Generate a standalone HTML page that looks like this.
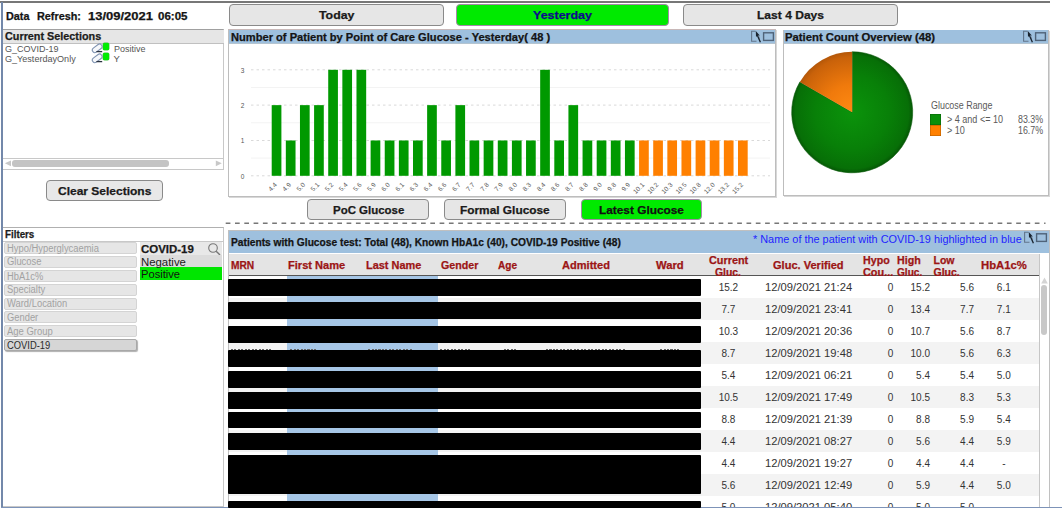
<!DOCTYPE html>
<html><head><meta charset="utf-8"><style>
html,body{margin:0;padding:0;background:#fff;width:1064px;height:512px;overflow:hidden;position:relative;font-family:"Liberation Sans", sans-serif;}
.t{position:absolute;white-space:nowrap;line-height:1;transform-origin:0 0;}
svg text{font-family:"Liberation Sans", sans-serif;}
</style></head><body>
<div style="position:absolute;left:0.00px;top:1.40px;width:1050.00px;height:1.30px;background:#777"></div>
<div style="position:absolute;left:1.20px;top:2.00px;width:1.40px;height:506.00px;background:#7388aa"></div>
<div class="t" style="left:5.60px;top:11.13px;font-size:10.50px;font-weight:bold;-webkit-text-stroke:0.25px currentColor;transform:scaleX(1.0295);color:#141414;">Data</div>
<div class="t" style="left:36.50px;top:11.13px;font-size:10.50px;font-weight:bold;-webkit-text-stroke:0.25px currentColor;transform:scaleX(1.0306);color:#141414;">Refresh:</div>
<div class="t" style="left:88.00px;top:11.13px;font-size:10.50px;font-weight:bold;-webkit-text-stroke:0.25px currentColor;transform:scaleX(1.2369);color:#141414;">13/09/2021</div>
<div class="t" style="left:157.70px;top:11.13px;font-size:10.50px;font-weight:bold;-webkit-text-stroke:0.25px currentColor;transform:scaleX(1.0983);color:#141414;">06:05</div>
<div style="position:absolute;left:229.00px;top:4.00px;width:215.20px;height:22.00px;box-sizing:border-box;background:#e6e6e6;border:1.5px solid #8a8a8a;border-radius:4px"></div>
<div class="t" style="left:319.10px;top:10.20px;font-size:11.00px;font-weight:bold;-webkit-text-stroke:0.25px currentColor;transform:scaleX(1.1209);color:#1a1a1a;">Today</div>
<div style="position:absolute;left:455.50px;top:4.00px;width:213.25px;height:22.00px;box-sizing:border-box;background:#00ea00;border:1.5px solid #a48aa8;border-radius:4px"></div>
<div class="t" style="left:533.00px;top:10.20px;font-size:11.00px;font-weight:bold;-webkit-text-stroke:0.25px currentColor;transform:scaleX(1.1349);color:#0c0c8c;">Yesterday</div>
<div style="position:absolute;left:683.00px;top:4.00px;width:215.00px;height:22.00px;box-sizing:border-box;background:#e6e6e6;border:1.5px solid #8a8a8a;border-radius:4px"></div>
<div class="t" style="left:757.00px;top:10.20px;font-size:11.00px;font-weight:bold;-webkit-text-stroke:0.25px currentColor;transform:scaleX(1.0957);color:#1a1a1a;">Last 4 Days</div>
<div style="position:absolute;left:3.00px;top:28.80px;width:221.00px;height:141.20px;box-sizing:border-box;border:1px solid #c8c8c8;border-left:none;border-top:1px solid #a0a0a0;background:#fff"></div>
<div style="position:absolute;left:3.00px;top:29.50px;width:220.50px;height:13.30px;background:#e6e6e6;border-bottom:1px solid #c0c0c0"></div>
<div class="t" style="left:4.80px;top:31.32px;font-size:10.50px;font-weight:bold;-webkit-text-stroke:0.25px currentColor;transform:scaleX(1.0305);color:#1c1c1c;">Current Selections</div>
<div class="t" style="left:4.50px;top:44.08px;font-size:9.50px;transform:scaleX(0.9471);color:#555;">G_COVID-19</div>
<div class="t" style="left:4.50px;top:54.08px;font-size:9.50px;transform:scaleX(0.9540);color:#555;">G_YesterdayOnly</div>
<div class="t" style="left:113.50px;top:44.08px;font-size:9.50px;transform:scaleX(0.9471);color:#555;">Positive</div>
<div class="t" style="left:113.50px;top:54.08px;font-size:9.50px;color:#555;">Y</div>
<div style="position:absolute;left:102.80px;top:43.30px;width:6.70px;height:6.60px;background:#00ec00;border-radius:1.5px;box-shadow:0 0 0 0.4px #40c040"></div>
<svg style="position:absolute;left:88px;top:42.0px" width="16" height="12" viewBox="0 0 16 12"><rect x="-5.4" y="-2.5" width="10.8" height="5" rx="2.4" transform="translate(9.2 6.3) rotate(-37)" fill="#f6f8fb" stroke="#8094b2" stroke-width="1.1"/><path d="M8.4 9.6 L14.2 9.6" stroke="#2a3340" stroke-width="1.3"/></svg>
<div style="position:absolute;left:102.80px;top:53.40px;width:6.70px;height:6.60px;background:#00ec00;border-radius:1.5px;box-shadow:0 0 0 0.4px #40c040"></div>
<svg style="position:absolute;left:88px;top:52.1px" width="16" height="12" viewBox="0 0 16 12"><rect x="-5.4" y="-2.5" width="10.8" height="5" rx="2.4" transform="translate(9.2 6.3) rotate(-37)" fill="#f6f8fb" stroke="#8094b2" stroke-width="1.1"/><path d="M8.4 9.6 L14.2 9.6" stroke="#2a3340" stroke-width="1.3"/></svg>
<div style="position:absolute;left:3.00px;top:158.20px;width:220.00px;height:10.80px;box-sizing:border-box;border-top:1px solid #c8c8c8;background:#fff"></div>
<div style="position:absolute;left:12.00px;top:160.00px;width:157.00px;height:6.50px;background:#c4c4c4;border-radius:3px"></div>
<svg style="position:absolute;left:4px;top:159px" width="220" height="10"><path d="M0.8 4.3 L7 1.5 L7 7.2 Z" fill="#c8c8c8"/><path d="M217.8 4.3 L211.8 1.5 L211.8 7.2 Z" fill="#c8c8c8"/></svg>
<div style="position:absolute;left:46.00px;top:179.60px;width:116.60px;height:21.20px;box-sizing:border-box;background:#e8e8e8;border:1.5px solid #8a8a8a;border-radius:4px"></div>
<div class="t" style="left:58.00px;top:186.10px;font-size:11.00px;font-weight:bold;-webkit-text-stroke:0.25px currentColor;transform:scaleX(1.0901);color:#1a1a1a;">Clear Selections</div>
<div style="position:absolute;left:3.00px;top:227.20px;width:221.00px;height:279.80px;box-sizing:border-box;border:1px solid #c8c8c8;border-left:none;border-top:1px solid #b0b0b0;background:#fff"></div>
<div style="position:absolute;left:3.00px;top:240.50px;width:220.50px;height:1.00px;background:#c8c8c8"></div>
<div class="t" style="left:4.70px;top:229.02px;font-size:10.50px;font-weight:bold;-webkit-text-stroke:0.25px currentColor;transform:scaleX(0.9298);color:#1c1c1c;">Filters</div>
<div style="position:absolute;left:4.20px;top:242.10px;width:133.30px;height:12.00px;box-sizing:border-box;background:#e6e6e6;border:1px solid #d4d4d4;border-radius:2px"></div>
<div class="t" style="left:6.80px;top:243.65px;font-size:10.00px;transform:scaleX(0.9394);color:#a2a2a2;">Hypo/Hyperglycaemia</div>
<div style="position:absolute;left:4.20px;top:255.90px;width:133.30px;height:12.00px;box-sizing:border-box;background:#e6e6e6;border:1px solid #d4d4d4;border-radius:2px"></div>
<div class="t" style="left:6.80px;top:257.45px;font-size:10.00px;transform:scaleX(0.9392);color:#a2a2a2;">Glucose</div>
<div style="position:absolute;left:4.20px;top:270.00px;width:133.30px;height:12.00px;box-sizing:border-box;background:#e6e6e6;border:1px solid #d4d4d4;border-radius:2px"></div>
<div class="t" style="left:6.80px;top:271.55px;font-size:10.00px;transform:scaleX(0.9304);color:#a2a2a2;">HbA1c%</div>
<div style="position:absolute;left:4.20px;top:283.80px;width:133.30px;height:12.00px;box-sizing:border-box;background:#e6e6e6;border:1px solid #d4d4d4;border-radius:2px"></div>
<div class="t" style="left:6.80px;top:285.35px;font-size:10.00px;transform:scaleX(0.9414);color:#a2a2a2;">Specialty</div>
<div style="position:absolute;left:4.20px;top:297.60px;width:133.30px;height:12.00px;box-sizing:border-box;background:#e6e6e6;border:1px solid #d4d4d4;border-radius:2px"></div>
<div class="t" style="left:6.80px;top:299.15px;font-size:10.00px;transform:scaleX(0.9390);color:#a2a2a2;">Ward/Location</div>
<div style="position:absolute;left:4.20px;top:311.40px;width:133.30px;height:12.00px;box-sizing:border-box;background:#e6e6e6;border:1px solid #d4d4d4;border-radius:2px"></div>
<div class="t" style="left:6.80px;top:312.95px;font-size:10.00px;transform:scaleX(0.9355);color:#a2a2a2;">Gender</div>
<div style="position:absolute;left:4.20px;top:325.30px;width:133.30px;height:12.00px;box-sizing:border-box;background:#e6e6e6;border:1px solid #d4d4d4;border-radius:2px"></div>
<div class="t" style="left:6.80px;top:326.85px;font-size:10.00px;transform:scaleX(0.9450);color:#a2a2a2;">Age Group</div>
<div style="position:absolute;left:4.20px;top:339.00px;width:133.30px;height:11.80px;box-sizing:border-box;background:#d6d6d6;border:1px solid #a8a8a8;border-radius:2px;box-shadow:1px 1px 1px #b0b0b0"></div>
<div class="t" style="left:6.80px;top:340.55px;font-size:10.00px;transform:scaleX(0.9367);color:#2a2a2a;">COVID-19</div>
<div style="position:absolute;left:139.50px;top:242.30px;width:82.30px;height:12.70px;background:#e8e8e8"></div>
<div class="t" style="left:141.00px;top:243.70px;font-size:11.00px;font-weight:bold;-webkit-text-stroke:0.25px currentColor;transform:scaleX(1.0408);color:#1a1a1a;">COVID-19</div>
<svg style="position:absolute;left:207px;top:242px" width="15" height="14" viewBox="0 0 15 14"><circle cx="6" cy="6" r="4.3" fill="none" stroke="#777" stroke-width="1.1"/><path d="M9.2 9.2 L13 13" stroke="#777" stroke-width="1.4"/></svg>
<div style="position:absolute;left:139.50px;top:255.00px;width:82.30px;height:11.60px;background:#dcdcdc"></div>
<div style="position:absolute;left:139.50px;top:266.60px;width:82.30px;height:13.70px;background:#00e600"></div>
<div class="t" style="left:141.00px;top:256.70px;font-size:11.00px;transform:scaleX(1.0342);color:#1a1a1a;">Negative</div>
<div class="t" style="left:141.00px;top:269.40px;font-size:11.00px;transform:scaleX(1.0127);color:#111;">Positive</div>
<div style="position:absolute;left:228.00px;top:29.30px;width:548.00px;height:168.00px;box-sizing:border-box;border:1px solid #bdbdbd;border-top:1px solid #c8b8b8;background:#fff;box-shadow:1px 1px 0 #d8d8d8"></div>
<div style="position:absolute;left:229.00px;top:30.00px;width:546.00px;height:12.90px;background:#9ec0de;box-shadow:0 1px 0 #b4c4d0"></div>
<div class="t" style="left:231.10px;top:32.23px;font-size:10.50px;font-weight:bold;-webkit-text-stroke:0.25px currentColor;transform:scaleX(1.0585);color:#141414;">Number of Patient by Point of Care Glucose - Yesterday( 48 )</div>
<div style="position:absolute;left:783.00px;top:30.00px;width:265.50px;height:166.00px;box-sizing:border-box;border:1px solid #bdbdbd;background:#fff;box-shadow:1px 1px 0 #d8d8d8"></div>
<div style="position:absolute;left:784.00px;top:30.00px;width:263.50px;height:12.90px;background:#9ec0de;box-shadow:0 1px 0 #b4c4d0"></div>
<div class="t" style="left:785.00px;top:32.23px;font-size:10.50px;font-weight:bold;-webkit-text-stroke:0.25px currentColor;transform:scaleX(1.0757);color:#141414;">Patient Count Overview (48)</div>
<svg style="position:absolute;left:749.5px;top:30.0px" width="26" height="13" viewBox="0 0 26 13"><path d="M6.5 11.2 L1.6 11.2 L1.6 1.2 L5.6 1.2" fill="none" stroke="#62748a" stroke-width="1.1"/><path d="M9.4 6.5 L9.4 9.5" fill="none" stroke="#7f92a8" stroke-width="0.9"/><path d="M5.8 1.0 L9.8 5.4 L7.6 5.5 L6.0 7.0 Z" fill="#1a2430"/><path d="M7.0 4.6 L10.4 12.2" fill="none" stroke="#1a2430" stroke-width="1.3"/><rect x="13.6" y="2.8" width="9.8" height="7.6" fill="none" stroke="#4f6379" stroke-width="1.4"/></svg>
<svg style="position:absolute;left:1022.0px;top:30.0px" width="26" height="13" viewBox="0 0 26 13"><path d="M6.5 11.2 L1.6 11.2 L1.6 1.2 L5.6 1.2" fill="none" stroke="#62748a" stroke-width="1.1"/><path d="M9.4 6.5 L9.4 9.5" fill="none" stroke="#7f92a8" stroke-width="0.9"/><path d="M5.8 1.0 L9.8 5.4 L7.6 5.5 L6.0 7.0 Z" fill="#1a2430"/><path d="M7.0 4.6 L10.4 12.2" fill="none" stroke="#1a2430" stroke-width="1.3"/><rect x="13.6" y="2.8" width="9.8" height="7.6" fill="none" stroke="#4f6379" stroke-width="1.4"/></svg>
<div style="position:absolute;left:307.20px;top:199.10px;width:122.20px;height:20.80px;box-sizing:border-box;background:#e6e6e6;border:1.5px solid #8a8a8a;border-radius:4px"></div>
<div class="t" style="left:332.80px;top:205.00px;font-size:11.00px;font-weight:bold;-webkit-text-stroke:0.25px currentColor;transform:scaleX(1.0414);color:#1a1a1a;">PoC Glucose</div>
<div style="position:absolute;left:444.00px;top:199.10px;width:121.60px;height:20.80px;box-sizing:border-box;background:#e6e6e6;border:1.5px solid #8a8a8a;border-radius:4px"></div>
<div class="t" style="left:460.10px;top:205.00px;font-size:11.00px;font-weight:bold;-webkit-text-stroke:0.25px currentColor;transform:scaleX(1.0789);color:#1a1a1a;">Formal Glucose</div>
<div style="position:absolute;left:580.80px;top:199.10px;width:121.20px;height:20.80px;box-sizing:border-box;background:#00ea00;border:1.5px solid #a48aa8;border-radius:4px"></div>
<div class="t" style="left:598.90px;top:205.00px;font-size:11.00px;font-weight:bold;-webkit-text-stroke:0.25px currentColor;transform:scaleX(1.0766);color:#111;">Latest Glucose</div>
<svg style="position:absolute;left:224px;top:222px" width="840" height="3"><line x1="1.7" y1="1.3" x2="821.5" y2="1.3" stroke="#777" stroke-width="1.6" stroke-dasharray="4.7 4.6"/></svg>
<div style="position:absolute;left:228.00px;top:230.00px;width:821.50px;height:282.00px;box-sizing:border-box;border:1px solid #c0c0c0;background:#fff"></div>
<div style="position:absolute;left:229.00px;top:231.00px;width:819.50px;height:22.00px;background:#9ec0de"></div>
<div class="t" style="left:230.80px;top:237.42px;font-size:10.50px;font-weight:bold;-webkit-text-stroke:0.25px currentColor;transform:scaleX(0.9730);color:#141414;">Patients with Glucose test: Total (48), Known HbA1c (40), COVID-19 Positive (48)</div>
<div class="t" style="left:753.30px;top:234.40px;font-size:11.00px;transform:scaleX(0.9897);color:#1f1fff;">* Name of the patient with COVID-19 highlighted in blue</div>
<svg style="position:absolute;left:1022.5px;top:231.0px" width="26" height="13" viewBox="0 0 26 13"><path d="M6.5 11.2 L1.6 11.2 L1.6 1.2 L5.6 1.2" fill="none" stroke="#62748a" stroke-width="1.1"/><path d="M9.4 6.5 L9.4 9.5" fill="none" stroke="#7f92a8" stroke-width="0.9"/><path d="M5.8 1.0 L9.8 5.4 L7.6 5.5 L6.0 7.0 Z" fill="#1a2430"/><path d="M7.0 4.6 L10.4 12.2" fill="none" stroke="#1a2430" stroke-width="1.3"/><rect x="13.6" y="2.8" width="9.8" height="7.6" fill="none" stroke="#4f6379" stroke-width="1.4"/></svg>
<div style="position:absolute;left:229.00px;top:253.80px;width:810.00px;height:21.70px;background:#e4e4e4;border-bottom:1.5px solid #555"></div>
<div class="t" style="left:231.00px;top:260.42px;font-size:10.50px;font-weight:bold;-webkit-text-stroke:0.25px currentColor;transform:scaleX(0.9704);color:#9c1515;">MRN</div>
<div class="t" style="left:288.00px;top:260.42px;font-size:10.50px;font-weight:bold;-webkit-text-stroke:0.25px currentColor;transform:scaleX(1.0541);color:#9c1515;">First Name</div>
<div class="t" style="left:366.00px;top:260.42px;font-size:10.50px;font-weight:bold;-webkit-text-stroke:0.25px currentColor;transform:scaleX(1.0413);color:#9c1515;">Last Name</div>
<div class="t" style="left:440.50px;top:260.42px;font-size:10.50px;font-weight:bold;-webkit-text-stroke:0.25px currentColor;transform:scaleX(1.0147);color:#9c1515;">Gender</div>
<div class="t" style="left:498.00px;top:260.42px;font-size:10.50px;font-weight:bold;-webkit-text-stroke:0.25px currentColor;transform:scaleX(0.9579);color:#9c1515;">Age</div>
<div class="t" style="left:562.40px;top:260.42px;font-size:10.50px;font-weight:bold;-webkit-text-stroke:0.25px currentColor;transform:scaleX(1.0528);color:#9c1515;">Admitted</div>
<div class="t" style="left:655.50px;top:260.42px;font-size:10.50px;font-weight:bold;-webkit-text-stroke:0.25px currentColor;transform:scaleX(1.0711);color:#9c1515;">Ward</div>
<div class="t" style="left:708.80px;top:255.32px;font-size:10.50px;font-weight:bold;-webkit-text-stroke:0.25px currentColor;transform:scaleX(1.0339);color:#9c1515;">Current</div>
<div class="t" style="left:714.80px;top:266.62px;font-size:10.50px;font-weight:bold;-webkit-text-stroke:0.25px currentColor;transform:scaleX(0.9905);color:#9c1515;">Gluc.</div>
<div class="t" style="left:772.90px;top:260.42px;font-size:10.50px;font-weight:bold;-webkit-text-stroke:0.25px currentColor;transform:scaleX(1.0521);color:#9c1515;">Gluc. Verified</div>
<div class="t" style="left:862.50px;top:255.32px;font-size:10.50px;font-weight:bold;-webkit-text-stroke:0.25px currentColor;transform:scaleX(1.0171);color:#9c1515;">Hypo</div>
<div class="t" style="left:862.50px;top:266.62px;font-size:10.50px;font-weight:bold;-webkit-text-stroke:0.25px currentColor;transform:scaleX(1.0357);color:#9c1515;">Cou...</div>
<div class="t" style="left:896.70px;top:255.32px;font-size:10.50px;font-weight:bold;-webkit-text-stroke:0.25px currentColor;transform:scaleX(1.0158);color:#9c1515;">High</div>
<div class="t" style="left:896.70px;top:266.62px;font-size:10.50px;font-weight:bold;-webkit-text-stroke:0.25px currentColor;transform:scaleX(0.9638);color:#9c1515;">Gluc.</div>
<div class="t" style="left:933.50px;top:255.32px;font-size:10.50px;font-weight:bold;-webkit-text-stroke:0.25px currentColor;color:#9c1515;">Low</div>
<div class="t" style="left:933.50px;top:266.62px;font-size:10.50px;font-weight:bold;-webkit-text-stroke:0.25px currentColor;color:#9c1515;">Gluc.</div>
<div class="t" style="left:981.20px;top:260.42px;font-size:10.50px;font-weight:bold;-webkit-text-stroke:0.25px currentColor;transform:scaleX(1.0752);color:#9c1515;">HbA1c%</div>
<div style="position:absolute;left:229.00px;top:276.00px;width:810.00px;height:22.00px;background:#ffffff"></div>
<div style="position:absolute;left:286.60px;top:276.00px;width:151.20px;height:22.00px;background:#a6c6e6"></div>
<div class="t" style="left:718.67px;top:282.95px;font-size:10.00px;color:#333;">15.2</div>
<div class="t" style="left:765.10px;top:282.95px;font-size:10.00px;transform:scaleX(1.1188);color:#333;">12/09/2021 21:24</div>
<div class="t" style="left:887.64px;top:282.95px;font-size:10.00px;color:#333;">0</div>
<div class="t" style="left:910.54px;top:282.95px;font-size:10.00px;color:#333;">15.2</div>
<div class="t" style="left:960.10px;top:282.95px;font-size:10.00px;color:#333;">5.6</div>
<div class="t" style="left:996.85px;top:282.95px;font-size:10.00px;color:#333;">6.1</div>
<div style="position:absolute;left:229.00px;top:298.00px;width:810.00px;height:22.00px;background:#f3f3f3"></div>
<div style="position:absolute;left:286.60px;top:298.00px;width:151.20px;height:22.00px;background:#a6c6e6"></div>
<div class="t" style="left:721.45px;top:304.95px;font-size:10.00px;color:#333;">7.7</div>
<div class="t" style="left:765.10px;top:304.95px;font-size:10.00px;transform:scaleX(1.1188);color:#333;">12/09/2021 23:41</div>
<div class="t" style="left:887.64px;top:304.95px;font-size:10.00px;color:#333;">0</div>
<div class="t" style="left:910.54px;top:304.95px;font-size:10.00px;color:#333;">13.4</div>
<div class="t" style="left:960.10px;top:304.95px;font-size:10.00px;color:#333;">7.7</div>
<div class="t" style="left:996.85px;top:304.95px;font-size:10.00px;color:#333;">7.1</div>
<div style="position:absolute;left:229.00px;top:320.00px;width:810.00px;height:22.00px;background:#ffffff"></div>
<div style="position:absolute;left:286.60px;top:320.00px;width:151.20px;height:22.00px;background:#a6c6e6"></div>
<div class="t" style="left:718.67px;top:326.95px;font-size:10.00px;color:#333;">10.3</div>
<div class="t" style="left:765.10px;top:326.95px;font-size:10.00px;transform:scaleX(1.1188);color:#333;">12/09/2021 20:36</div>
<div class="t" style="left:887.64px;top:326.95px;font-size:10.00px;color:#333;">0</div>
<div class="t" style="left:910.54px;top:326.95px;font-size:10.00px;color:#333;">10.7</div>
<div class="t" style="left:960.10px;top:326.95px;font-size:10.00px;color:#333;">5.6</div>
<div class="t" style="left:996.85px;top:326.95px;font-size:10.00px;color:#333;">8.7</div>
<div style="position:absolute;left:229.00px;top:342.00px;width:810.00px;height:22.00px;background:#f3f3f3"></div>
<div style="position:absolute;left:286.60px;top:342.00px;width:151.20px;height:22.00px;background:#a6c6e6"></div>
<div class="t" style="left:721.45px;top:348.95px;font-size:10.00px;color:#333;">8.7</div>
<div class="t" style="left:765.10px;top:348.95px;font-size:10.00px;transform:scaleX(1.1188);color:#333;">12/09/2021 19:48</div>
<div class="t" style="left:887.64px;top:348.95px;font-size:10.00px;color:#333;">0</div>
<div class="t" style="left:910.54px;top:348.95px;font-size:10.00px;color:#333;">10.0</div>
<div class="t" style="left:960.10px;top:348.95px;font-size:10.00px;color:#333;">5.6</div>
<div class="t" style="left:996.85px;top:348.95px;font-size:10.00px;color:#333;">6.3</div>
<div style="position:absolute;left:229.00px;top:364.00px;width:810.00px;height:22.00px;background:#ffffff"></div>
<div style="position:absolute;left:286.60px;top:364.00px;width:151.20px;height:22.00px;background:#a6c6e6"></div>
<div class="t" style="left:721.45px;top:370.95px;font-size:10.00px;color:#333;">5.4</div>
<div class="t" style="left:765.10px;top:370.95px;font-size:10.00px;transform:scaleX(1.1188);color:#333;">12/09/2021 06:21</div>
<div class="t" style="left:887.64px;top:370.95px;font-size:10.00px;color:#333;">0</div>
<div class="t" style="left:916.10px;top:370.95px;font-size:10.00px;color:#333;">5.4</div>
<div class="t" style="left:960.10px;top:370.95px;font-size:10.00px;color:#333;">5.4</div>
<div class="t" style="left:996.85px;top:370.95px;font-size:10.00px;color:#333;">5.0</div>
<div style="position:absolute;left:229.00px;top:386.00px;width:810.00px;height:22.00px;background:#f3f3f3"></div>
<div style="position:absolute;left:286.60px;top:386.00px;width:151.20px;height:22.00px;background:#a6c6e6"></div>
<div class="t" style="left:718.67px;top:392.95px;font-size:10.00px;color:#333;">10.5</div>
<div class="t" style="left:765.10px;top:392.95px;font-size:10.00px;transform:scaleX(1.1188);color:#333;">12/09/2021 17:49</div>
<div class="t" style="left:887.64px;top:392.95px;font-size:10.00px;color:#333;">0</div>
<div class="t" style="left:910.54px;top:392.95px;font-size:10.00px;color:#333;">10.5</div>
<div class="t" style="left:960.10px;top:392.95px;font-size:10.00px;color:#333;">8.3</div>
<div class="t" style="left:996.85px;top:392.95px;font-size:10.00px;color:#333;">5.3</div>
<div style="position:absolute;left:229.00px;top:408.00px;width:810.00px;height:22.00px;background:#ffffff"></div>
<div style="position:absolute;left:286.60px;top:408.00px;width:151.20px;height:22.00px;background:#a6c6e6"></div>
<div class="t" style="left:721.45px;top:414.95px;font-size:10.00px;color:#333;">8.8</div>
<div class="t" style="left:765.10px;top:414.95px;font-size:10.00px;transform:scaleX(1.1188);color:#333;">12/09/2021 21:39</div>
<div class="t" style="left:887.64px;top:414.95px;font-size:10.00px;color:#333;">0</div>
<div class="t" style="left:916.10px;top:414.95px;font-size:10.00px;color:#333;">8.8</div>
<div class="t" style="left:960.10px;top:414.95px;font-size:10.00px;color:#333;">5.9</div>
<div class="t" style="left:996.85px;top:414.95px;font-size:10.00px;color:#333;">5.4</div>
<div style="position:absolute;left:229.00px;top:430.00px;width:810.00px;height:22.00px;background:#f3f3f3"></div>
<div style="position:absolute;left:286.60px;top:430.00px;width:151.20px;height:22.00px;background:#a6c6e6"></div>
<div class="t" style="left:721.45px;top:436.95px;font-size:10.00px;color:#333;">4.4</div>
<div class="t" style="left:765.10px;top:436.95px;font-size:10.00px;transform:scaleX(1.1188);color:#333;">12/09/2021 08:27</div>
<div class="t" style="left:887.64px;top:436.95px;font-size:10.00px;color:#333;">0</div>
<div class="t" style="left:916.10px;top:436.95px;font-size:10.00px;color:#333;">5.6</div>
<div class="t" style="left:960.10px;top:436.95px;font-size:10.00px;color:#333;">4.4</div>
<div class="t" style="left:996.85px;top:436.95px;font-size:10.00px;color:#333;">5.9</div>
<div style="position:absolute;left:229.00px;top:452.00px;width:810.00px;height:22.00px;background:#ffffff"></div>
<div style="position:absolute;left:286.60px;top:452.00px;width:151.20px;height:22.00px;background:#a6c6e6"></div>
<div class="t" style="left:721.45px;top:458.95px;font-size:10.00px;color:#333;">4.4</div>
<div class="t" style="left:765.10px;top:458.95px;font-size:10.00px;transform:scaleX(1.1188);color:#333;">12/09/2021 19:27</div>
<div class="t" style="left:887.64px;top:458.95px;font-size:10.00px;color:#333;">0</div>
<div class="t" style="left:916.10px;top:458.95px;font-size:10.00px;color:#333;">4.4</div>
<div class="t" style="left:960.10px;top:458.95px;font-size:10.00px;color:#333;">4.4</div>
<div class="t" style="left:1002.13px;top:458.95px;font-size:10.00px;color:#333;">-</div>
<div style="position:absolute;left:229.00px;top:474.00px;width:810.00px;height:22.00px;background:#f3f3f3"></div>
<div style="position:absolute;left:286.60px;top:474.00px;width:151.20px;height:22.00px;background:#a6c6e6"></div>
<div class="t" style="left:721.45px;top:480.95px;font-size:10.00px;color:#333;">5.6</div>
<div class="t" style="left:765.10px;top:480.95px;font-size:10.00px;transform:scaleX(1.1188);color:#333;">12/09/2021 12:49</div>
<div class="t" style="left:887.64px;top:480.95px;font-size:10.00px;color:#333;">0</div>
<div class="t" style="left:916.10px;top:480.95px;font-size:10.00px;color:#333;">5.9</div>
<div class="t" style="left:960.10px;top:480.95px;font-size:10.00px;color:#333;">4.4</div>
<div class="t" style="left:996.85px;top:480.95px;font-size:10.00px;color:#333;">5.0</div>
<div style="position:absolute;left:229.00px;top:496.00px;width:810.00px;height:10.50px;background:#ffffff"></div>
<div style="position:absolute;left:286.60px;top:496.00px;width:151.20px;height:10.50px;background:#a6c6e6"></div>
<div class="t" style="left:721.45px;top:502.95px;font-size:10.00px;color:#333;">5.0</div>
<div class="t" style="left:765.10px;top:502.95px;font-size:10.00px;transform:scaleX(1.1188);color:#333;">12/09/2021 05:40</div>
<div class="t" style="left:887.64px;top:502.95px;font-size:10.00px;color:#333;">0</div>
<div class="t" style="left:916.10px;top:502.95px;font-size:10.00px;color:#333;">5.0</div>
<div class="t" style="left:960.10px;top:502.95px;font-size:10.00px;color:#333;">5.0</div>
<div style="position:absolute;left:228.00px;top:278.60px;width:472.90px;height:17.20px;background:#000;border-radius:1px"></div>
<div style="position:absolute;left:228.00px;top:302.00px;width:472.90px;height:17.20px;background:#000;border-radius:1px"></div>
<div style="position:absolute;left:228.00px;top:326.25px;width:472.90px;height:16.45px;background:#000;border-radius:1px"></div>
<div style="position:absolute;left:228.00px;top:349.70px;width:472.90px;height:17.20px;background:#000;border-radius:1px"></div>
<div style="position:absolute;left:228.00px;top:371.25px;width:472.90px;height:17.15px;background:#000;border-radius:1px"></div>
<div style="position:absolute;left:228.00px;top:392.00px;width:472.90px;height:16.75px;background:#000;border-radius:1px"></div>
<div style="position:absolute;left:228.00px;top:412.20px;width:472.90px;height:15.80px;background:#000;border-radius:1px"></div>
<div style="position:absolute;left:228.00px;top:432.60px;width:472.90px;height:17.00px;background:#000;border-radius:1px"></div>
<div style="position:absolute;left:228.00px;top:454.50px;width:472.90px;height:39.20px;background:#000;border-radius:1px"></div>
<div style="position:absolute;left:231.00px;top:348.60px;width:41.00px;height:1.20px;background:repeating-linear-gradient(90deg,#666 0 2px,transparent 2px 3.5px)"></div>
<div style="position:absolute;left:290.00px;top:348.60px;width:28.00px;height:1.20px;background:repeating-linear-gradient(90deg,#666 0 2px,transparent 2px 3.5px)"></div>
<div style="position:absolute;left:368.00px;top:348.60px;width:44.00px;height:1.20px;background:repeating-linear-gradient(90deg,#666 0 2px,transparent 2px 3.5px)"></div>
<div style="position:absolute;left:440.00px;top:348.60px;width:30.00px;height:1.20px;background:repeating-linear-gradient(90deg,#666 0 2px,transparent 2px 3.5px)"></div>
<div style="position:absolute;left:504.00px;top:348.60px;width:12.00px;height:1.20px;background:repeating-linear-gradient(90deg,#666 0 2px,transparent 2px 3.5px)"></div>
<div style="position:absolute;left:546.00px;top:348.60px;width:80.00px;height:1.20px;background:repeating-linear-gradient(90deg,#666 0 2px,transparent 2px 3.5px)"></div>
<div style="position:absolute;left:660.00px;top:348.60px;width:20.00px;height:1.20px;background:repeating-linear-gradient(90deg,#666 0 2px,transparent 2px 3.5px)"></div>
<div style="position:absolute;left:1039.00px;top:254.00px;width:10.00px;height:253.00px;background:#fff;border-left:1px solid #c6c6c6"></div>
<svg style="position:absolute;left:1040px;top:276px" width="9" height="9"><path d="M4.5 1.5 L7.8 7.5 L1.2 7.5 Z" fill="#d4d4d4"/></svg>
<div style="position:absolute;left:1041.00px;top:284.70px;width:6.00px;height:50.80px;background:#c8c8c8;border-radius:3px"></div>
<div style="position:absolute;left:1048.50px;top:254.00px;width:1.00px;height:253.00px;background:#c0c0c0"></div>
<div style="position:absolute;left:0.00px;top:508.00px;width:1064.00px;height:4.00px;background:#fff"></div>
<div style="position:absolute;left:1.00px;top:506.50px;width:1061.00px;height:1.50px;background:#7d93b8"></div>
<div style="position:absolute;left:228.00px;top:500.50px;width:472.90px;height:7.50px;background:#000;border-radius:1px"></div>
<svg style="position:absolute;left:0;top:0" width="1064" height="512" viewBox="0 0 1064 512">
<defs><radialGradient id="pg" cx="852" cy="112" r="61" gradientUnits="userSpaceOnUse"><stop offset="0" stop-color="#0b930b"/><stop offset="0.6" stop-color="#088008"/><stop offset="0.93" stop-color="#076f07"/><stop offset="1" stop-color="#055605"/></radialGradient><radialGradient id="po" cx="852" cy="112" r="61" gradientUnits="userSpaceOnUse"><stop offset="0" stop-color="#ff8a12"/><stop offset="0.45" stop-color="#f07a0c"/><stop offset="0.9" stop-color="#c9620a"/><stop offset="1" stop-color="#b05508"/></radialGradient></defs>
<line x1="251" y1="175.8" x2="770" y2="175.8" stroke="#d9d9d9" stroke-width="1" stroke-dasharray="2.5 3"/>
<text x="242.5" y="178.6" font-family='Liberation Sans' font-size="6.5" fill="#555" text-anchor="middle">0</text>
<line x1="251" y1="140.5" x2="770" y2="140.5" stroke="#d9d9d9" stroke-width="1" stroke-dasharray="2.5 3"/>
<text x="242.5" y="143.3" font-family='Liberation Sans' font-size="6.5" fill="#555" text-anchor="middle">1</text>
<line x1="251" y1="105.1" x2="770" y2="105.1" stroke="#d9d9d9" stroke-width="1" stroke-dasharray="2.5 3"/>
<text x="242.5" y="107.9" font-family='Liberation Sans' font-size="6.5" fill="#555" text-anchor="middle">2</text>
<line x1="251" y1="69.8" x2="770" y2="69.8" stroke="#d9d9d9" stroke-width="1" stroke-dasharray="2.5 3"/>
<text x="242.5" y="72.6" font-family='Liberation Sans' font-size="6.5" fill="#555" text-anchor="middle">3</text>
<line x1="251" y1="158.1" x2="770" y2="158.1" stroke="#f3f3f3" stroke-width="1"/>
<line x1="251" y1="122.8" x2="770" y2="122.8" stroke="#f3f3f3" stroke-width="1"/>
<line x1="251" y1="87.5" x2="770" y2="87.5" stroke="#f3f3f3" stroke-width="1"/>
<rect x="271.70" y="105.14" width="9.7" height="70.66" fill="#009900"/>
<text x="277.35" y="185.30" font-family="Liberation Sans" font-size="6.5" fill="#5a5a5a" text-anchor="end" transform="rotate(-45 277.35 185.30)">4.4</text>
<rect x="285.83" y="140.47" width="9.7" height="35.33" fill="#009900"/>
<text x="291.48" y="185.30" font-family="Liberation Sans" font-size="6.5" fill="#5a5a5a" text-anchor="end" transform="rotate(-45 291.48 185.30)">4.9</text>
<rect x="299.96" y="105.14" width="9.7" height="70.66" fill="#009900"/>
<text x="305.61" y="185.30" font-family="Liberation Sans" font-size="6.5" fill="#5a5a5a" text-anchor="end" transform="rotate(-45 305.61 185.30)">5.0</text>
<rect x="314.09" y="105.14" width="9.7" height="70.66" fill="#009900"/>
<text x="319.74" y="185.30" font-family="Liberation Sans" font-size="6.5" fill="#5a5a5a" text-anchor="end" transform="rotate(-45 319.74 185.30)">5.1</text>
<rect x="328.22" y="69.81" width="9.7" height="105.99" fill="#009900"/>
<text x="333.87" y="185.30" font-family="Liberation Sans" font-size="6.5" fill="#5a5a5a" text-anchor="end" transform="rotate(-45 333.87 185.30)">5.2</text>
<rect x="342.35" y="69.81" width="9.7" height="105.99" fill="#009900"/>
<text x="348.00" y="185.30" font-family="Liberation Sans" font-size="6.5" fill="#5a5a5a" text-anchor="end" transform="rotate(-45 348.00 185.30)">5.4</text>
<rect x="356.48" y="69.81" width="9.7" height="105.99" fill="#009900"/>
<text x="362.13" y="185.30" font-family="Liberation Sans" font-size="6.5" fill="#5a5a5a" text-anchor="end" transform="rotate(-45 362.13 185.30)">5.6</text>
<rect x="370.61" y="140.47" width="9.7" height="35.33" fill="#009900"/>
<text x="376.26" y="185.30" font-family="Liberation Sans" font-size="6.5" fill="#5a5a5a" text-anchor="end" transform="rotate(-45 376.26 185.30)">5.9</text>
<rect x="384.74" y="140.47" width="9.7" height="35.33" fill="#009900"/>
<text x="390.39" y="185.30" font-family="Liberation Sans" font-size="6.5" fill="#5a5a5a" text-anchor="end" transform="rotate(-45 390.39 185.30)">6.0</text>
<rect x="398.87" y="140.47" width="9.7" height="35.33" fill="#009900"/>
<text x="404.52" y="185.30" font-family="Liberation Sans" font-size="6.5" fill="#5a5a5a" text-anchor="end" transform="rotate(-45 404.52 185.30)">6.1</text>
<rect x="413.00" y="140.47" width="9.7" height="35.33" fill="#009900"/>
<text x="418.65" y="185.30" font-family="Liberation Sans" font-size="6.5" fill="#5a5a5a" text-anchor="end" transform="rotate(-45 418.65 185.30)">6.3</text>
<rect x="427.13" y="105.14" width="9.7" height="70.66" fill="#009900"/>
<text x="432.78" y="185.30" font-family="Liberation Sans" font-size="6.5" fill="#5a5a5a" text-anchor="end" transform="rotate(-45 432.78 185.30)">6.4</text>
<rect x="441.26" y="140.47" width="9.7" height="35.33" fill="#009900"/>
<text x="446.91" y="185.30" font-family="Liberation Sans" font-size="6.5" fill="#5a5a5a" text-anchor="end" transform="rotate(-45 446.91 185.30)">6.6</text>
<rect x="455.39" y="105.14" width="9.7" height="70.66" fill="#009900"/>
<text x="461.04" y="185.30" font-family="Liberation Sans" font-size="6.5" fill="#5a5a5a" text-anchor="end" transform="rotate(-45 461.04 185.30)">6.7</text>
<rect x="469.52" y="140.47" width="9.7" height="35.33" fill="#009900"/>
<text x="475.17" y="185.30" font-family="Liberation Sans" font-size="6.5" fill="#5a5a5a" text-anchor="end" transform="rotate(-45 475.17 185.30)">7.7</text>
<rect x="483.65" y="140.47" width="9.7" height="35.33" fill="#009900"/>
<text x="489.30" y="185.30" font-family="Liberation Sans" font-size="6.5" fill="#5a5a5a" text-anchor="end" transform="rotate(-45 489.30 185.30)">7.8</text>
<rect x="497.78" y="140.47" width="9.7" height="35.33" fill="#009900"/>
<text x="503.43" y="185.30" font-family="Liberation Sans" font-size="6.5" fill="#5a5a5a" text-anchor="end" transform="rotate(-45 503.43 185.30)">7.9</text>
<rect x="511.91" y="140.47" width="9.7" height="35.33" fill="#009900"/>
<text x="517.56" y="185.30" font-family="Liberation Sans" font-size="6.5" fill="#5a5a5a" text-anchor="end" transform="rotate(-45 517.56 185.30)">8.0</text>
<rect x="526.04" y="140.47" width="9.7" height="35.33" fill="#009900"/>
<text x="531.69" y="185.30" font-family="Liberation Sans" font-size="6.5" fill="#5a5a5a" text-anchor="end" transform="rotate(-45 531.69 185.30)">8.3</text>
<rect x="540.17" y="69.81" width="9.7" height="105.99" fill="#009900"/>
<text x="545.82" y="185.30" font-family="Liberation Sans" font-size="6.5" fill="#5a5a5a" text-anchor="end" transform="rotate(-45 545.82 185.30)">8.4</text>
<rect x="554.30" y="140.47" width="9.7" height="35.33" fill="#009900"/>
<text x="559.95" y="185.30" font-family="Liberation Sans" font-size="6.5" fill="#5a5a5a" text-anchor="end" transform="rotate(-45 559.95 185.30)">8.6</text>
<rect x="568.43" y="105.14" width="9.7" height="70.66" fill="#009900"/>
<text x="574.08" y="185.30" font-family="Liberation Sans" font-size="6.5" fill="#5a5a5a" text-anchor="end" transform="rotate(-45 574.08 185.30)">8.7</text>
<rect x="582.56" y="140.47" width="9.7" height="35.33" fill="#009900"/>
<text x="588.21" y="185.30" font-family="Liberation Sans" font-size="6.5" fill="#5a5a5a" text-anchor="end" transform="rotate(-45 588.21 185.30)">8.8</text>
<rect x="596.69" y="140.47" width="9.7" height="35.33" fill="#009900"/>
<text x="602.34" y="185.30" font-family="Liberation Sans" font-size="6.5" fill="#5a5a5a" text-anchor="end" transform="rotate(-45 602.34 185.30)">9.0</text>
<rect x="610.82" y="140.47" width="9.7" height="35.33" fill="#009900"/>
<text x="616.47" y="185.30" font-family="Liberation Sans" font-size="6.5" fill="#5a5a5a" text-anchor="end" transform="rotate(-45 616.47 185.30)">9.8</text>
<rect x="624.95" y="140.47" width="9.7" height="35.33" fill="#009900"/>
<text x="630.60" y="185.30" font-family="Liberation Sans" font-size="6.5" fill="#5a5a5a" text-anchor="end" transform="rotate(-45 630.60 185.30)">9.9</text>
<rect x="639.08" y="140.47" width="9.7" height="35.33" fill="#ff8000"/>
<text x="644.73" y="185.30" font-family="Liberation Sans" font-size="6.5" fill="#5a5a5a" text-anchor="end" transform="rotate(-45 644.73 185.30)">10.1</text>
<rect x="653.21" y="140.47" width="9.7" height="35.33" fill="#ff8000"/>
<text x="658.86" y="185.30" font-family="Liberation Sans" font-size="6.5" fill="#5a5a5a" text-anchor="end" transform="rotate(-45 658.86 185.30)">10.2</text>
<rect x="667.34" y="140.47" width="9.7" height="35.33" fill="#ff8000"/>
<text x="672.99" y="185.30" font-family="Liberation Sans" font-size="6.5" fill="#5a5a5a" text-anchor="end" transform="rotate(-45 672.99 185.30)">10.3</text>
<rect x="681.47" y="140.47" width="9.7" height="35.33" fill="#ff8000"/>
<text x="687.12" y="185.30" font-family="Liberation Sans" font-size="6.5" fill="#5a5a5a" text-anchor="end" transform="rotate(-45 687.12 185.30)">10.5</text>
<rect x="695.60" y="140.47" width="9.7" height="35.33" fill="#ff8000"/>
<text x="701.25" y="185.30" font-family="Liberation Sans" font-size="6.5" fill="#5a5a5a" text-anchor="end" transform="rotate(-45 701.25 185.30)">10.8</text>
<rect x="709.73" y="140.47" width="9.7" height="35.33" fill="#ff8000"/>
<text x="715.38" y="185.30" font-family="Liberation Sans" font-size="6.5" fill="#5a5a5a" text-anchor="end" transform="rotate(-45 715.38 185.30)">12.0</text>
<rect x="723.86" y="140.47" width="9.7" height="35.33" fill="#ff8000"/>
<text x="729.51" y="185.30" font-family="Liberation Sans" font-size="6.5" fill="#5a5a5a" text-anchor="end" transform="rotate(-45 729.51 185.30)">13.2</text>
<rect x="737.99" y="140.47" width="9.7" height="35.33" fill="#ff8000"/>
<text x="743.64" y="185.30" font-family="Liberation Sans" font-size="6.5" fill="#5a5a5a" text-anchor="end" transform="rotate(-45 743.64 185.30)">15.2</text>
<path d="M852.20 112.30 L852.20 51.80 A60.50 60.50 0 1 1 799.81 82.05 Z" fill="url(#pg)" stroke="#0a5a0a" stroke-width="0.6"/>
<path d="M852.20 112.30 L852.20 51.80 A60.50 60.50 0 0 0 799.81 82.05 Z" fill="url(#po)"/>
</svg>
<div class="t" style="left:931.20px;top:100.65px;font-size:10.00px;transform:scaleX(0.8922);color:#5a5a5a;">Glucose Range</div>
<div style="position:absolute;left:930.00px;top:114.20px;width:10.80px;height:10.60px;background:#0a8f0a;box-shadow:inset 0 0 0 0.5px #086008"></div>
<div style="position:absolute;left:930.00px;top:124.80px;width:10.80px;height:11.00px;background:#ff8000;box-shadow:inset 0 0 0 0.5px #b05a00"></div>
<div class="t" style="left:947.10px;top:114.65px;font-size:10.00px;transform:scaleX(0.9032);color:#5a5a5a;">&gt; 4 and &lt;= 10</div>
<div class="t" style="left:1017.80px;top:114.65px;font-size:10.00px;transform:scaleX(0.8854);color:#5a5a5a;">83.3%</div>
<div class="t" style="left:947.10px;top:125.65px;font-size:10.00px;transform:scaleX(0.9068);color:#5a5a5a;">&gt; 10</div>
<div class="t" style="left:1017.80px;top:125.65px;font-size:10.00px;transform:scaleX(0.8854);color:#5a5a5a;">16.7%</div>
</body></html>
